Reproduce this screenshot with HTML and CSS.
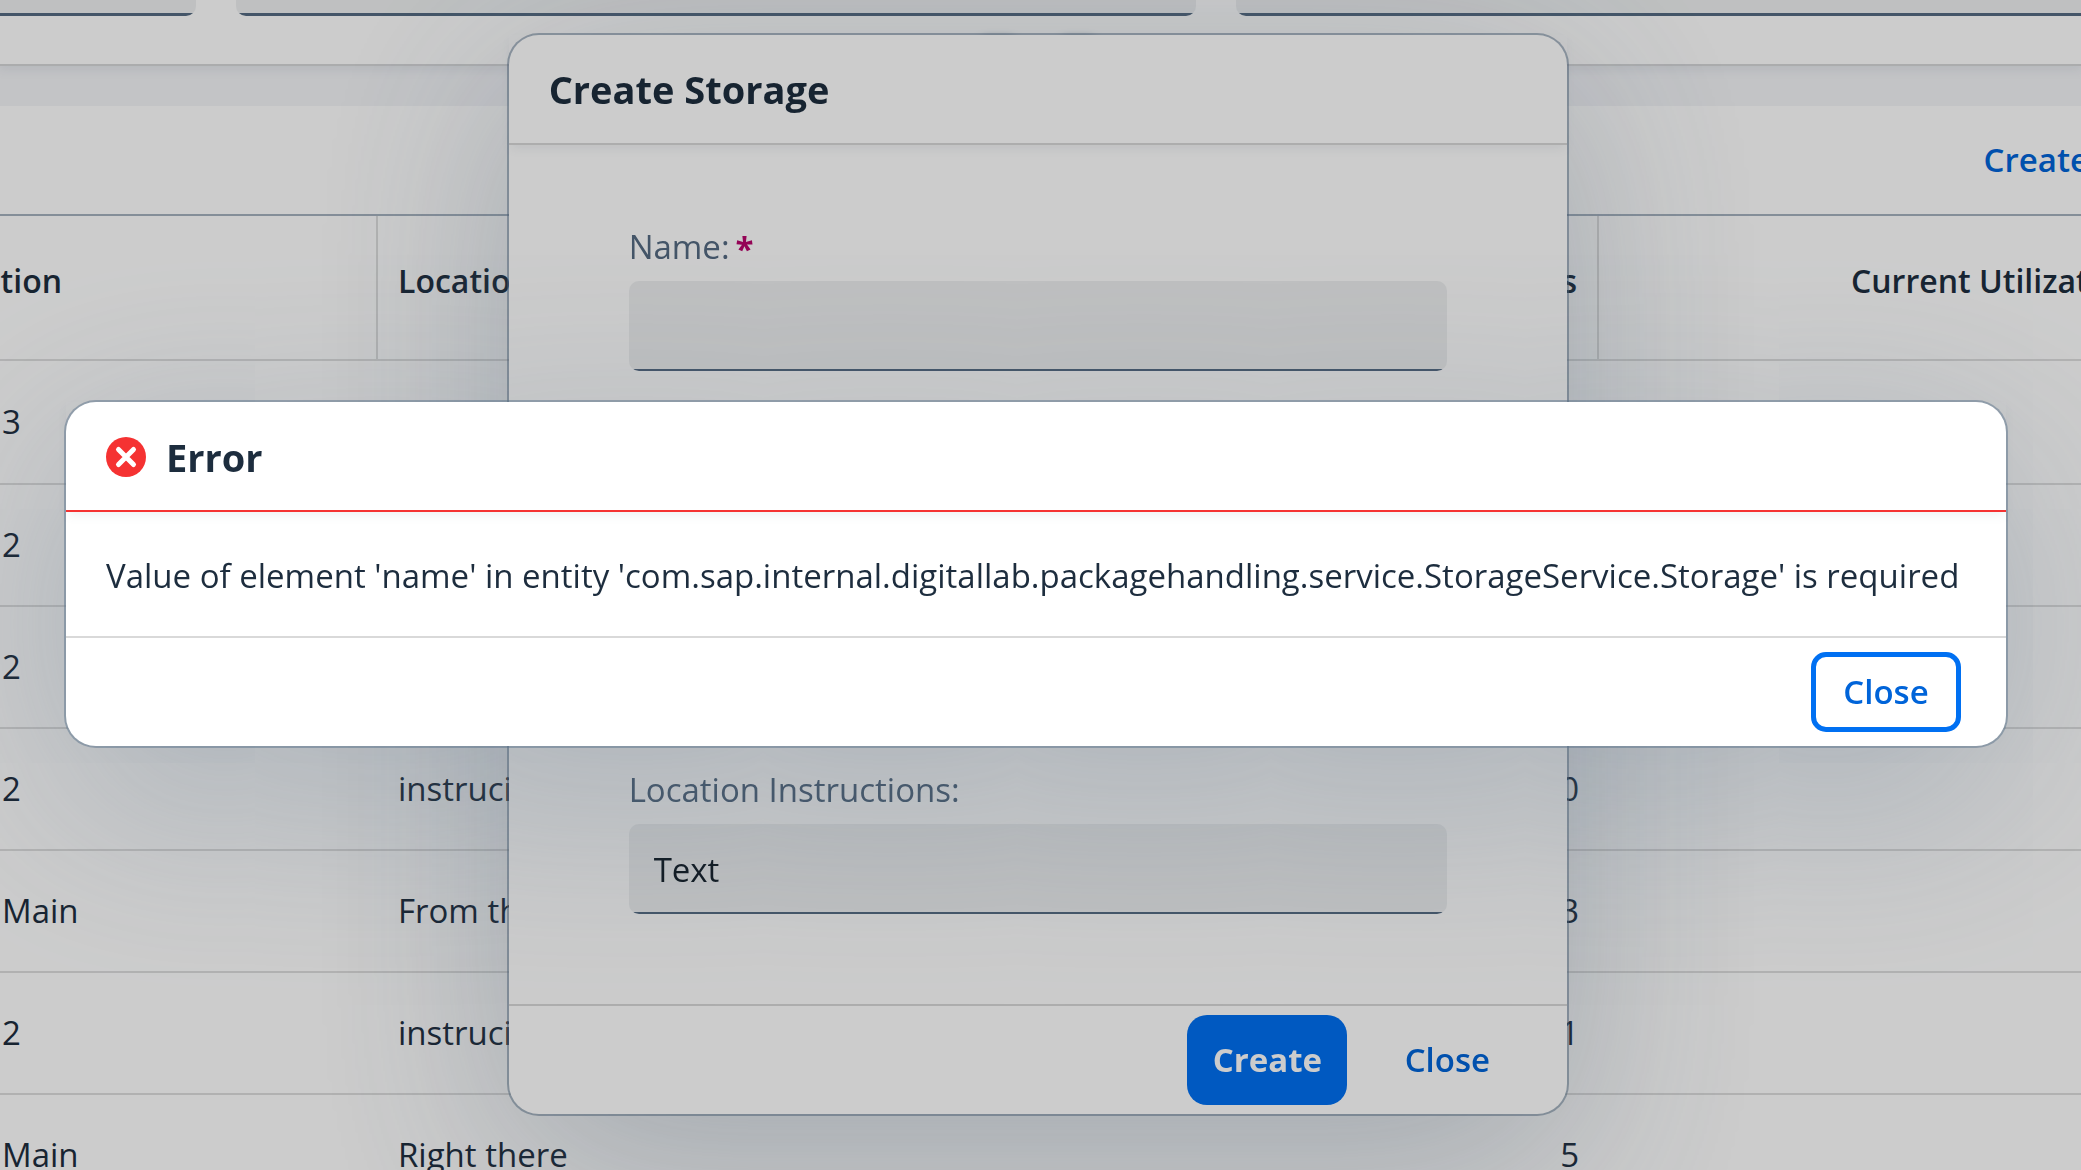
FILE: index.html
```html
<!DOCTYPE html>
<html lang="en">
<head>
  <meta charset="utf-8">
  <meta name="viewport" content="width=device-width, initial-scale=1">
  <title>Storages</title>
  <link rel="stylesheet" href="styles.css">
</head>
<body>
  <main class="page">
    <section class="filter-bar">
      <div class="filter-fields">
        <input class="filter-input" type="text" aria-label="Search">
        <input class="filter-input" type="text" aria-label="Name filter">
        <input class="filter-input filter-input-open" type="text" aria-label="Location filter">
      </div>
      <div class="header-controls">
        <button class="round-button" type="button" aria-label="Collapse header"></button>
        <button class="round-button" type="button" aria-label="Pin header"></button>
      </div>
    </section>

    <section class="list">
      <div class="toolbar">
        <button class="text-button toolbar-create" type="button">Create</button>
      </div>
      <table class="table">
        <colgroup>
          <col class="col-location">
          <col class="col-instructions">
          <col class="col-count">
          <col>
        </colgroup>
        <thead>
          <tr>
            <th class="cut">ation</th>
            <th>Location</th>
            <th class="num">Packages</th>
            <th class="utilization">Current Utilization</th>
          </tr>
        </thead>
        <tbody>
          <tr><td class="flush">3</td><td></td><td></td><td></td></tr>
          <tr><td class="flush">2</td><td></td><td></td><td></td></tr>
          <tr><td class="flush">2</td><td></td><td></td><td></td></tr>
          <tr><td class="flush">2</td><td>instrucitons</td><td class="num">0</td><td></td></tr>
          <tr><td class="flush">Main</td><td>From there</td><td class="num">3</td><td></td></tr>
          <tr><td class="flush">2</td><td>instrucitons</td><td class="num">1</td><td></td></tr>
          <tr><td class="flush">Main</td><td>Right there</td><td class="num">5</td><td></td></tr>
        </tbody>
      </table>
    </section>
  </main>

  <div class="layer">
    <form class="dialog form-dialog" role="dialog" aria-labelledby="create-title">
      <header class="dialog-header">
        <h2 class="dialog-title" id="create-title">Create Storage</h2>
      </header>
      <div class="form-body">
        <div class="field">
          <label class="label" for="name">Name:<span class="required">*</span></label>
          <input class="input" id="name" type="text">
        </div>
        <div class="field">
          <label class="label" for="instructions">Location Instructions:</label>
          <input class="input" id="instructions" type="text" value="Text">
        </div>
      </div>
      <footer class="dialog-footer">
        <button class="button primary" type="button">Create</button>
        <button class="button" type="button">Close</button>
      </footer>
    </form>
  </div>

  <div class="layer layer-dimmed">
    <section class="dialog error-dialog" role="alertdialog" aria-labelledby="error-title" aria-describedby="error-text">
      <header class="dialog-header error-header">
        <svg class="error-icon" viewBox="0 0 40 40" aria-hidden="true">
          <circle cx="20" cy="20" r="20" fill="#f53232"/>
          <path d="M12.500 12.500l15 15M27.500 12.500l-15 15" stroke="#fff" stroke-width="5" stroke-linecap="round"/>
        </svg>
        <h2 class="dialog-title" id="error-title">Error</h2>
      </header>
      <p class="error-text" id="error-text">Value of element 'name' in entity 'com.sap.internal.digitallab.packagehandling.service.StorageService.Storage' is required</p>
      <footer class="dialog-footer">
        <button class="button focused" type="button">Close</button>
      </footer>
    </section>
  </div>
</body>
</html>
```
FILE: styles.css
```css
* {
  box-sizing: border-box;
}

body {
  margin: 0;
  height: 100vh;
  overflow: hidden;
  background: #f4f5f8;
  color: #1d2d3e;
  font: 33px/44px "Open Sans", "Noto Sans", sans-serif;
}

button,
input {
  font: inherit;
}

/* Page behind the dialogs */
.page {
  height: 100vh;
  overflow: hidden;
}

.filter-bar {
  position: relative;
  height: 66px;
  margin-bottom: 40px;
  background: #fff;
  border-bottom: 2px solid #d6d7d9;
  box-shadow: 0 2px 10px 2px rgba(85, 107, 130, 0.1);
}

.filter-fields {
  display: grid;
  grid-template-columns: 196fr 960fr 845fr;
  gap: 40px;
}

.filter-input {
  min-width: 0;
  height: 16px;
  padding: 0;
  border: 0;
  border-radius: 0 0 10px 10px;
  background: linear-gradient(#556b82, #556b82) bottom / 100% 3px no-repeat #eff1f2;
}

.filter-input:first-child {
  border-bottom-left-radius: 0;
}

.filter-input-open {
  border-bottom-right-radius: 0;
}

.header-controls {
  position: absolute;
  left: 0;
  right: 6px;
  bottom: -28px;
  display: flex;
  justify-content: center;
  gap: 24px;
}

.round-button {
  width: 56px;
  height: 56px;
  border: 0;
  border-radius: 20px;
  background: #fff;
  box-shadow: 0 0 6px rgba(85, 107, 130, 0.6);
}

.list {
  background: #fff;
}

.toolbar {
  display: flex;
  align-items: center;
  justify-content: flex-end;
  height: 108px;
}

.text-button {
  padding: 0;
  border: 0;
  background: none;
  color: #0064d9;
  font-weight: 600;
}

.toolbar-create {
  margin-right: -8px;
}

.table {
  width: 100%;
  border-top: 2px solid #a6b2bf;
  border-collapse: separate;
  border-spacing: 0;
  table-layout: fixed;
}

.col-location {
  width: 378px;
}

.col-instructions {
  width: 822px;
}

.col-count {
  width: 399px;
}

.table th,
.table td {
  height: 122px;
  padding: 0 20px;
  border-bottom: 2px solid #dedede;
  text-align: left;
  white-space: nowrap;
}

.table th {
  height: 145px;
  padding-bottom: 13px;
  border-right: 2px solid #dedede;
  font-size: 32px;
  font-weight: 600;
}

.table tbody tr:first-child td {
  height: 124px;
}

.table .flush {
  padding-left: 2px;
}

.table .cut {
  padding-left: 0;
  text-indent: -18px;
}

.table .num {
  text-align: right;
}

.table .utilization {
  padding-left: 252px;
  padding-right: 0;
  border-right: 0;
}

/* Dialogs */
.layer {
  position: fixed;
  inset: 0;
  display: grid;
  place-items: center;
  padding: 0 5px 21px 0;
}

.layer-dimmed {
  padding: 0 9px 23px 0;
  background: rgba(0, 0, 0, 0.2);
}

.dialog {
  display: flex;
  flex-direction: column;
  border-radius: 30px;
  background: #fff;
  box-shadow:
    0 0 0 2px rgba(91, 115, 139, 0.5),
    0 50px 200px rgba(91, 115, 139, 0.32);
}

.dialog-header {
  display: flex;
  align-items: center;
  gap: 20px;
  height: 110px;
  padding: 0 40px;
  border-bottom: 2px solid #d9d9d9;
  box-shadow: 0 5px 10px -2px rgba(85, 107, 130, 0.1);
}

.dialog-title {
  margin: 0;
  font-size: 38px;
  font-weight: 700;
}

.dialog-footer {
  display: flex;
  align-items: center;
  justify-content: flex-end;
  gap: 20px;
  height: 110px;
  padding: 0 40px;
  border-top: 2px solid #d9d9d9;
}

.button {
  min-width: 160px;
  height: 90px;
  padding: 0 24px;
  border: 0;
  border-radius: 20px;
  background: none;
  color: #0064d9;
  font-weight: 600;
}

.primary {
  background: #0070f2;
  color: #fff;
  font-weight: 700;
}

.focused {
  outline: 5px solid #0070f2;
  outline-offset: -10px;
}

.form-dialog {
  width: 51%;
  height: calc(100% - 70px);
}

.form-body {
  display: flex;
  flex: 1;
  flex-direction: column;
  justify-content: space-between;
  padding: 78px 120px 90px;
}

.field {
  display: flex;
  flex-direction: column;
  gap: 10px;
}

.label {
  color: #556b82;
  line-height: 48px;
}

.required {
  margin-left: 6px;
  color: #ba066c;
  font-weight: 700;
  line-height: 24px;
  vertical-align: -2px;
}

.input {
  width: 100%;
  height: 90px;
  padding: 0 25px;
  border: 0;
  border-radius: 10px;
  background: linear-gradient(#556b82, #556b82) bottom / 100% 2px no-repeat #eff1f2;
  color: #131e29;
}

.error-dialog {
  width: calc(100% - 132px);
}

.error-header {
  padding-top: 2px;
  border-bottom-color: #f53232;
}

.error-icon {
  width: 40px;
  height: 40px;
}

.error-text {
  margin: 0;
  padding: 42px 40px 38px;
}
```
